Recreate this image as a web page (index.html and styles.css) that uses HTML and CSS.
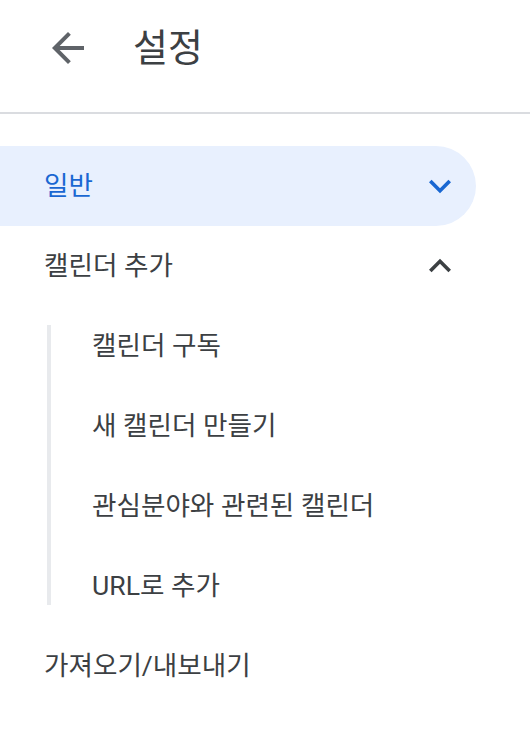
FILE: index.html
```html
<!DOCTYPE html>
<html lang="ko">
<head>
<meta charset="utf-8">
<link rel="stylesheet" href="styles.css">
</head>
<body>
<header class="header">
  <svg class="back" viewBox="0 0 24 24" width="48" height="48"><path d="M20 11H7.83l5.59-5.59L12 4l-8 8 8 8 1.41-1.41L7.83 13H20v-2z"/></svg>
  <h1 class="title">설정</h1>
</header>
<div class="divider"></div>
<nav class="menu">
  <div class="row row-active">
    <span class="label">일반</span>
    <svg class="chev" viewBox="0 0 24 24" width="44" height="44"><path d="M16.59 8.59L12 13.17 7.41 8.59 6 10l6 6 6-6z"/></svg>
  </div>
  <div class="row">
    <span class="label">캘린더 추가</span>
    <svg class="chev" viewBox="0 0 24 24" width="44" height="44"><path d="M12 8l-6 6 1.41 1.41L12 10.83l4.59 4.58L18 14z"/></svg>
  </div>
  <div class="sub">
    <div class="sub-line"></div>
    <div class="sub-items">
      <div class="row sub-row"><span class="label">캘린더 구독</span></div>
      <div class="row sub-row"><span class="label">새 캘린더 만들기</span></div>
      <div class="row sub-row"><span class="label">관심분야와 관련된 캘린더</span></div>
      <div class="row sub-row"><span class="label">URL로 추가</span></div>
    </div>
  </div>
  <div class="row">
    <span class="label">가져오기/내보내기</span>
  </div>
</nav>
</body>
</html>
```

FILE: styles.css
```css
html, body {
  margin: 0;
  padding: 0;
  background: #ffffff;
}
body {
  width: 530px;
  font-family: Roboto, "Noto Sans CJK KR", sans-serif;
  color: #3c4043;
}
.header {
  height: 112px;
  display: flex;
  align-items: center;
  padding-left: 44px;
  box-sizing: border-box;
}
.back {
  fill: #5f6368;
  margin-top: -16px;
}
.title {
  margin: -16px 0 0 41px;
  font-size: 38px;
  font-weight: 400;
  color: #3c4043;
  line-height: 48px;
}
.divider {
  height: 2px;
  background: #dadce0;
}
.menu {
  padding-top: 32px;
}
.row {
  height: 80px;
  display: flex;
  align-items: center;
  padding-left: 44px;
  padding-right: 68px;
  box-sizing: border-box;
  width: 530px;
  font-size: 26.6px;
}
.label {
  flex: 1;
  line-height: 40px;
}
.row-active {
  width: 476px;
  padding-right: 14px;
  background: #e8f0fe;
  border-radius: 0 40px 40px 0;
  color: #1967d2;
}
.row-active .chev {
  fill: #1967d2;
}
.chev {
  fill: #3c4043;
  flex: none;
}
.sub {
  display: flex;
}
.sub-line {
  width: 4px;
  margin: 19px 0 21px 47px;
  background: #e8eaed;
  flex: none;
}
.sub-items {
  flex: 1;
}
.sub-row {
  width: auto;
  padding-left: 41px;
}
```
